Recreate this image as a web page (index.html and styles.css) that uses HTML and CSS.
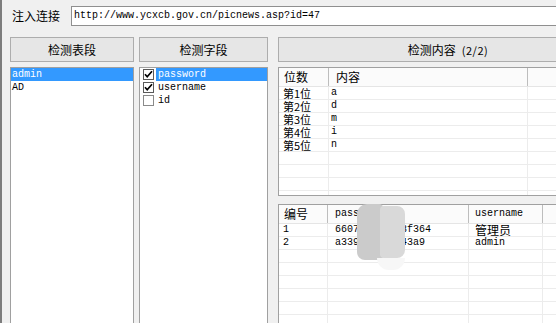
FILE: index.html
```html
<!DOCTYPE html>
<html>
<head>
<meta charset="utf-8">
<link rel="stylesheet" href="styles.css">
</head>
<body>
<div class="win">
  <div class="urlbar">
    <span class="lbl">注入连接</span>
    <div class="url">http://www.ycxcb.gov.cn/picnews.asp?id=47</div>
  </div>
  <div class="main">
    <div class="c1">
      <div class="btn">检测表段</div>
      <div class="listbox">
        <div class="item sel">admin</div>
        <div class="item">AD</div>
      </div>
    </div>
    <div class="c2">
      <div class="btn">检测字段</div>
      <div class="listbox">
        <div class="citem"><span class="cb"><svg width="11" height="11" viewBox="0 0 11 11"><path d="M2 5.2 L4.2 7.8 L9 2.2" fill="none" stroke="#000" stroke-width="1.7"/></svg></span><span class="ct sel">password</span></div>
        <div class="citem"><span class="cb"><svg width="11" height="11" viewBox="0 0 11 11"><path d="M2 5.2 L4.2 7.8 L9 2.2" fill="none" stroke="#000" stroke-width="1.7"/></svg></span><span class="ct">username</span></div>
        <div class="citem"><span class="cb off"></span><span class="ct">id</span></div>
      </div>
    </div>
    <div class="c3">
      <div class="btn">检测内容<span class="cnt">(2/2)</span></div>
      <div class="lv lv1">
        <div class="hrow">
          <div class="hc w1a cjk">位数</div>
          <div class="hc w2a cjk">内容</div>
          <div class="hc last"></div>
        </div>
        <div class="row"><div class="cell w1a cjk">第1位</div><div class="cell w2a mono p2">a</div><div class="cell last"></div></div>
        <div class="row"><div class="cell w1a cjk">第2位</div><div class="cell w2a mono p2">d</div><div class="cell last"></div></div>
        <div class="row"><div class="cell w1a cjk">第3位</div><div class="cell w2a mono p2">m</div><div class="cell last"></div></div>
        <div class="row"><div class="cell w1a cjk">第4位</div><div class="cell w2a mono p2">i</div><div class="cell last"></div></div>
        <div class="row"><div class="cell w1a cjk">第5位</div><div class="cell w2a mono p2">n</div><div class="cell last"></div></div>
        <div class="row"><div class="cell w1a"></div><div class="cell w2a"></div><div class="cell last"></div></div>
        <div class="row"><div class="cell w1a"></div><div class="cell w2a"></div><div class="cell last"></div></div>
        <div class="row"><div class="cell w1a"></div><div class="cell w2a"></div><div class="cell last"></div></div>
        <div class="row"><div class="cell w1a"></div><div class="cell w2a"></div><div class="cell last"></div></div>
      </div>
      <div class="lv lv2">
        <div class="hrow">
          <div class="hc w1b cjk">编号</div>
          <div class="hc w2b mono">password</div>
          <div class="hc w3b mono">username</div>
          <div class="hc last"></div>
        </div>
        <div class="row"><div class="cell w1b mono">1</div><div class="cell w2b mono">6607a8c2e913f364</div><div class="cell w3b cjk">管理员</div><div class="cell last"></div></div>
        <div class="row"><div class="cell w1b mono">2</div><div class="cell w2b mono">a33970b6d5143a9</div><div class="cell w3b mono">admin</div><div class="cell last"></div></div>
        <div class="row"><div class="cell w1b"></div><div class="cell w2b"></div><div class="cell w3b"></div><div class="cell last"></div></div>
        <div class="row"><div class="cell w1b"></div><div class="cell w2b"></div><div class="cell w3b"></div><div class="cell last"></div></div>
        <div class="row"><div class="cell w1b"></div><div class="cell w2b"></div><div class="cell w3b"></div><div class="cell last"></div></div>
        <div class="row"><div class="cell w1b"></div><div class="cell w2b"></div><div class="cell w3b"></div><div class="cell last"></div></div>
        <div class="row"><div class="cell w1b"></div><div class="cell w2b"></div><div class="cell w3b"></div><div class="cell last"></div></div>
        <div class="row"><div class="cell w1b"></div><div class="cell w2b"></div><div class="cell w3b"></div><div class="cell last"></div></div>
        <div class="blob"><div class="bl"></div><div class="br"></div><div class="btail"></div></div>
      </div>
    </div>
  </div>
</div>
</body>
</html>
```

FILE: styles.css
```css
html, body {
  margin: 0;
  padding: 0;
}
body {
  width: 556px;
  height: 323px;
  overflow: hidden;
  background: #f0f0f0;
  font-family: "Noto Sans CJK SC", "Liberation Sans", sans-serif;
  font-size: 12px;
  color: #000;
}
.win {
  width: 640px;
  height: 323px;
  box-sizing: border-box;
  border-left: 2px solid #7d7d7d;
}
.urlbar {
  display: flex;
  align-items: flex-start;
  padding: 6px 0 0 10px;
  height: 31px;
  box-sizing: border-box;
}
.lbl {
  width: 48px;
  line-height: 20px;
  margin-right: 11px;
  white-space: nowrap;
}
.url {
  flex: 1;
  height: 20px;
  box-sizing: border-box;
  border: 1px solid #8f8f8f;
  background: #fff;
  font-family: "Liberation Mono", monospace;
  font-size: 10px;
  line-height: 18px;
  padding-left: 2px;
  white-space: nowrap;
}
.main {
  display: flex;
  padding-left: 8px;
  margin-top: 6px;
}
.c1 { width: 124px; }
.c2 { width: 129px; margin-left: 5px; }
.c3 { width: 340px; margin-left: 10px; }
.btn {
  height: 25px;
  box-sizing: border-box;
  border: 1px solid #adadad;
  background: #e6e6e6;
  display: flex;
  align-items: center;
  justify-content: center;
  white-space: nowrap;
}
.cnt { font-size: 11px; letter-spacing: 0.5px; margin-left: 6px; }
.listbox {
  margin-top: 5px;
  height: 260px;
  box-sizing: border-box;
  border: 1px solid #a0a0a0;
  background: #fff;
  font-family: "Liberation Mono", monospace;
  font-size: 10px;
}
.item {
  height: 13px;
  line-height: 13px;
  padding-left: 1px;
}
.sel {
  background: #3399ff;
  color: #fff;
}
.citem {
  display: flex;
  align-items: center;
  height: 13px;
  line-height: 13px;
}
.cb {
  width: 11px;
  height: 11px;
  box-sizing: border-box;
  border: 1px solid #5a5a5a;
  margin-left: 3px;
  margin-right: 2px;
  display: flex;
  align-items: center;
  justify-content: center;
  background: #fff;
}
.cb svg { display: block; flex: none; }
.cb.off { border-color: #8a8a8a; }
.ct {
  flex: 1;
  padding-left: 2px;
  height: 13px;
}
.lv {
  margin-top: 5px;
  height: 129px;
  box-sizing: border-box;
  border: 1px solid #a0a0a0;
  background: #fff;
  overflow: hidden;
  position: relative;
}
.lv2 {
  margin-top: 8px;
  height: 130px;
  overflow: visible;
}
.hrow {
  display: flex;
  height: 19px;
  box-sizing: border-box;
  border-bottom: 1px solid #e5e5e5;
  background: #fbfbfb;
}
.hc {
  box-sizing: border-box;
  border-right: 1px solid #bdbdbd;
  line-height: 17px;
  padding-left: 5px;
  white-space: nowrap;
}
.row {
  display: flex;
  height: 13px;
  box-sizing: border-box;
  border-bottom: 1px solid #ececec;
}
.cell {
  box-sizing: border-box;
  border-right: 1px solid #ececec;
  line-height: 12px;
  padding-left: 4px;
  white-space: nowrap;
}
.last { flex: 1; border-right: none; }
.w1a { width: 50px; }
.w2a { width: 199px; }
.w1b { width: 49px; }
.w2b { width: 141px; padding-left: 7px; overflow: hidden; }
.w3b { width: 74px; padding-left: 6px; }
.p2 { padding-left: 2px; }
.lv1 .hc.w2a { padding-left: 7px; }
.cjk {
  font-family: "Noto Sans CJK SC", sans-serif;
  font-size: 12px;
}
.row .cjk {
  font-size: 11px;
  line-height: 12px;
}
.row .w3b.cjk { font-size: 12px; }
.mono {
  font-family: "Liberation Mono", monospace;
  font-size: 10px;
}
.blob {
  position: absolute;
  left: 78px;
  top: -2px;
  width: 48px;
  height: 70px;
}
.bl {
  position: absolute;
  left: 0;
  top: 1px;
  width: 26px;
  height: 56px;
  background: #cbcbcb;
  border-radius: 10px 4px 4px 8px;
}
.br {
  position: absolute;
  left: 23px;
  top: 3px;
  width: 25px;
  height: 52px;
  background: #d9d9d9;
  border-radius: 4px 8px 8px 4px;
}
.btail {
  position: absolute;
  left: 20px;
  top: 55px;
  width: 28px;
  height: 12px;
  background: #f7f7f7;
  border-radius: 0 0 12px 12px;
}
```
